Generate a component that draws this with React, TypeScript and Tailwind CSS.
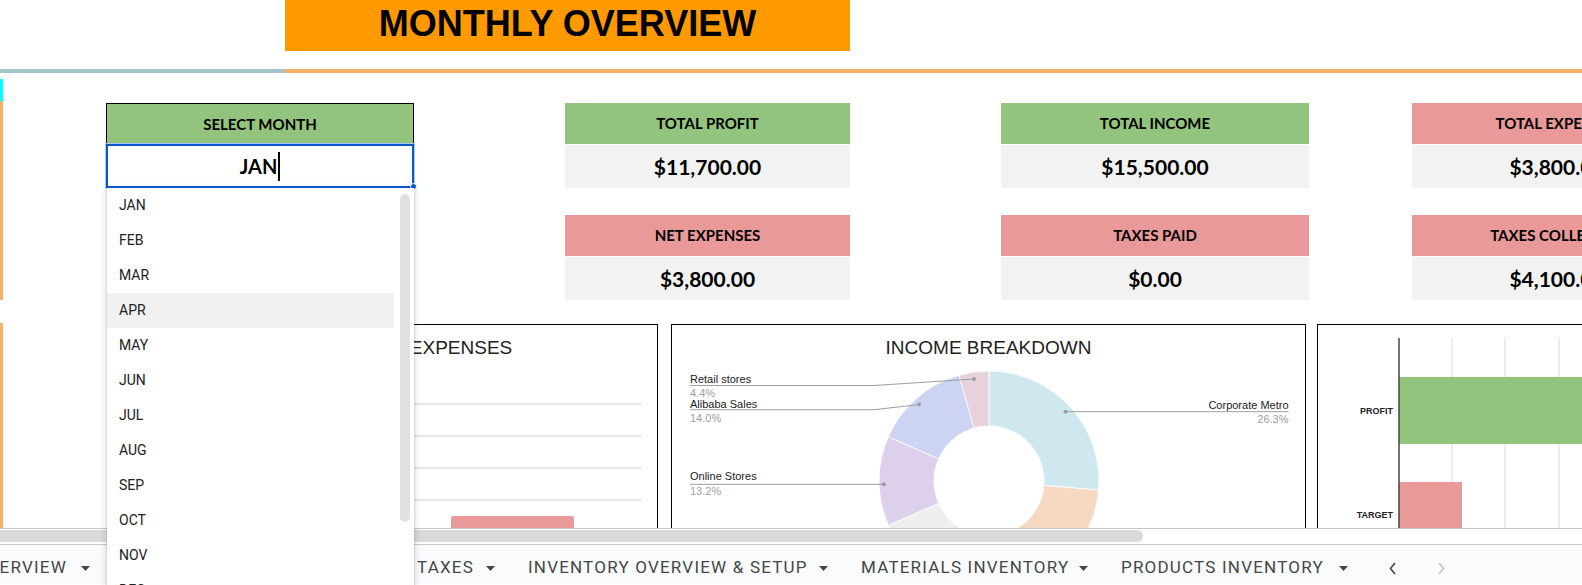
import React from "react"

const months = ["JAN", "FEB", "MAR", "APR", "MAY", "JUN", "JUL", "AUG", "SEP", "OCT", "NOV", "DEC"]

type StatProps = {
  label: string
  value: string
  tone: "green" | "red"
  className: string
}

function Stat({ label, value, tone, className }: StatProps) {
  return (
    <div className={`shrink-0 font-['Lato',sans-serif] text-black ${className}`}>
      <div
        className={`flex h-[41px] items-center justify-center whitespace-nowrap text-[15px] font-bold ${
          tone === "green" ? "bg-[#93c47d]" : "bg-[#ea9999]"
        }`}
      >
        {label}
      </div>
      <div className="mt-[1px] flex h-[43px] items-center justify-center whitespace-nowrap bg-[#f2f2f2] text-[21px] font-bold">
        {value}
      </div>
    </div>
  )
}

function Caret() {
  return (
    <svg width="9" height="5" viewBox="0 0 9 5" className="shrink-0">
      <path d="M0 0h9L4.5 5z" fill="#444746" />
    </svg>
  )
}

function Tab({ name, className }: { name: string; className: string }) {
  return (
    <div className={`flex shrink-0 items-center justify-between pl-[16px] pr-[17px] ${className}`}>
      <span className="whitespace-nowrap">{name}</span>
      <Caret />
    </div>
  )
}

function MonthPicker() {
  return (
    <div className="w-[308px] shrink-0">
      <div className="flex h-[41px] items-center justify-center border border-b-0 border-black bg-[#93c47d] font-['Lato',sans-serif] text-[15px] font-bold text-black">
        SELECT MONTH
      </div>
      <div className="relative flex h-[44px] items-center justify-center border-2 border-[#0b57d0] bg-white font-['Lato',sans-serif] text-[20px] font-bold text-black ring-1 ring-[#a8c7fa]">
        <span>JAN</span>
        <span className="ml-[1px] h-[29px] w-[2px] bg-black" />
        <span className="absolute -bottom-[4px] -right-[5px] h-[7px] w-[7px] rounded-full border border-white bg-[#0b57d0]" />
      </div>
    </div>
  )
}

function MonthMenu() {
  return (
    <div className="absolute left-[107px] top-[188px] z-20 flex h-[420px] w-[307px] bg-white font-['Roboto',sans-serif] text-[14px] text-[#202124] shadow-[0_2px_6px_2px_rgba(60,64,67,0.15),0_1px_2px_rgba(60,64,67,0.3)]">
      <div className="w-[287px]">
        {months.map((m) => (
          <div
            key={m}
            className={`flex h-[35px] items-center pl-[12px] ${m === "APR" ? "bg-[#f1f1f1]" : ""}`}
          >
            {m}
          </div>
        ))}
      </div>
      <div className="ml-[6px] mt-[6px] h-[328px] w-[10px] rounded-full bg-[#e1e1e1]" />
    </div>
  )
}

function ExpensesChart() {
  return (
    <div className="h-[260px] w-[458px] shrink-0 border border-black bg-white">
      <div className="flex h-[46px] items-center justify-center font-['Liberation_Sans',Arial,sans-serif] text-[19px] text-[#222]">
        TOTAL EXPENSES
      </div>
      <svg width="456" height="212" viewBox="0 0 456 212">
        {[33, 65, 97, 129].map((y) => (
          <line key={y} x1="40" x2="440" y1={y} y2={y} stroke="#e0e0e0" strokeWidth="1.5" />
        ))}
        <rect x="250" y="145" width="123" height="80" rx="2" fill="#ea9999" />
      </svg>
    </div>
  )
}

function IncomeChart() {
  const slices = [
    { d: "M317,0 A110,110 0 0 1 426.63,118.97 L371.82,114.49 A55,55 0 0 0 317,55 Z", c: "#cfe7ee" },
    { d: "M426.63,118.97 A110,110 0 0 1 279.38,213.37 L298.19,161.68 A55,55 0 0 0 371.82,114.49 Z", c: "#f7d8c1" },
    { d: "M279.38,213.37 A110,110 0 0 1 216.32,154.31 L266.66,132.16 A55,55 0 0 0 298.19,161.68 Z", c: "#efefef" },
    { d: "M216.32,154.31 A110,110 0 0 1 216.32,65.69 L266.66,87.84 A55,55 0 0 0 266.66,132.16 Z", c: "#dcd0eb" },
    { d: "M216.32,65.69 A110,110 0 0 1 286.98,4.18 L301.99,57.09 A55,55 0 0 0 266.66,87.84 Z", c: "#ccd3f3" },
    { d: "M286.98,4.18 A110,110 0 0 1 317,0 L317,55 A55,55 0 0 0 301.99,57.09 Z", c: "#e7d1dd" },
  ]
  return (
    <div className="h-[260px] w-[635px] shrink-0 border border-black bg-white">
      <div className="flex h-[46px] items-center justify-center font-['Liberation_Sans',Arial,sans-serif] text-[19px] text-[#222]">
        INCOME BREAKDOWN
      </div>
      <svg width="633" height="212" viewBox="0 0 633 212" fontFamily="Liberation Sans, Arial, sans-serif" fontSize="11">
        {slices.map((s, i) => (
          <path key={i} d={s.d} fill={s.c} stroke="#fff" strokeWidth="0.8" />
        ))}
        <g stroke="#9e9e9e" strokeWidth="1" fill="none">
          <polyline points="18,14.5 202,14.5 302,8" />
          <polyline points="18,38.7 202,38.7 247,33.6" />
          <polyline points="18,113.3 212,113.3" />
          <polyline points="393.5,40.7 616.5,40.7" />
        </g>
        <g fill="#9e9e9e">
          <circle cx="302" cy="8" r="2" />
          <circle cx="247" cy="33.6" r="2" />
          <circle cx="212" cy="113.3" r="2" />
          <circle cx="393.5" cy="40.7" r="2" />
        </g>
        <text x="18" y="12" fill="#222">Retail stores</text>
        <text x="18" y="25.5" fill="#9e9e9e">4.4%</text>
        <text x="18" y="36.6" fill="#222">Alibaba Sales</text>
        <text x="18" y="50.7" fill="#9e9e9e">14.0%</text>
        <text x="18" y="109.2" fill="#222">Online Stores</text>
        <text x="18" y="124.4" fill="#9e9e9e">13.2%</text>
        <text x="616.5" y="37.6" fill="#222" textAnchor="end">Corporate Metro</text>
        <text x="616.5" y="51.7" fill="#9e9e9e" textAnchor="end">26.3%</text>
      </svg>
    </div>
  )
}

function TargetChart() {
  return (
    <div className="h-[260px] w-[400px] shrink-0 border border-black bg-white">
      <svg width="398" height="258" viewBox="0 0 398 258" fontFamily="Liberation Sans, Arial, sans-serif">
        {[134, 187, 241, 294, 347].map((x) => (
          <line key={x} x1={x} x2={x} y1="13" y2="258" stroke="#e6e6e6" strokeWidth="1.5" />
        ))}
        <rect x="81" y="52" width="320" height="67" fill="#93c47d" />
        <rect x="81" y="157" width="63" height="67" fill="#ea9999" />
        <line x1="81" x2="81" y1="13" y2="258" stroke="#444" strokeWidth="1.5" />
        <text x="75" y="89" fontSize="9" fontWeight="bold" fill="#222" textAnchor="end">PROFIT</text>
        <text x="75" y="193" fontSize="9" fontWeight="bold" fill="#222" textAnchor="end">TARGET</text>
      </svg>
    </div>
  )
}

export default function App() {
  return (
    <div className="relative h-[585px] w-[1582px] overflow-hidden bg-white font-['Liberation_Sans',Arial,sans-serif]">
      {/* Título */}
      <div className="flex h-[69px]">
        <div className="w-[285px] shrink-0" />
        <div className="flex h-[51px] w-[565px] shrink-0 items-center justify-center bg-[#ff9900] pb-[3px] text-[36px] font-bold leading-none text-black">
          MONTHLY OVERVIEW
        </div>
      </div>
      <div className="flex h-[4px]">
        <div className="w-[285px] shrink-0 bg-[#a2c4c9]" />
        <div className="flex-1 bg-[#f6b26b]" />
      </div>

      {/* Planilha */}
      <div className="flex h-[455px] overflow-hidden">
        <div className="flex w-[3px] shrink-0 flex-col">
          <div className="h-[6px]" />
          <div className="h-[22px] bg-[#00ffff]" />
          <div className="h-[199px] bg-[#f6b26b]" />
          <div className="h-[23px]" />
          <div className="flex-1 bg-[#f6b26b]" />
        </div>

        <div className="flex-1 pt-[30px]">
          <div className="flex">
            <div className="w-[103px] shrink-0" />
            <MonthPicker />
            <div className="w-[151px] shrink-0" />
            <Stat label="TOTAL PROFIT" value="$11,700.00" tone="green" className="w-[285px]" />
            <div className="w-[151px] shrink-0" />
            <Stat label="TOTAL INCOME" value="$15,500.00" tone="green" className="w-[308px]" />
            <div className="w-[103px] shrink-0" />
            <Stat label="TOTAL EXPENSES" value="$3,800.00" tone="red" className="w-[290px]" />
          </div>

          <div className="mt-[27px] flex">
            <div className="w-[562px] shrink-0" />
            <Stat label="NET EXPENSES" value="$3,800.00" tone="red" className="w-[285px]" />
            <div className="w-[151px] shrink-0" />
            <Stat label="TAXES PAID" value="$0.00" tone="red" className="w-[308px]" />
            <div className="w-[103px] shrink-0" />
            <Stat label="TAXES COLLECTED" value="$4,100.00" tone="red" className="w-[290px]" />
          </div>

          <div className="mt-[24px] flex">
            <div className="w-[197px] shrink-0" />
            <ExpensesChart />
            <div className="w-[13px] shrink-0" />
            <IncomeChart />
            <div className="w-[11px] shrink-0" />
            <TargetChart />
          </div>
        </div>
      </div>

      {/* Barra de rolagem */}
      <div className="h-[17px] border-y border-[#c7c7c7] bg-white">
        <div className="mt-[1px] h-[12px] w-[1143px] rounded-r-full bg-[#dadada]" />
      </div>

      {/* Abas */}
      <div className="flex h-[39px] items-center overflow-hidden bg-[#f9fbfd] pt-[7px] font-['Roboto',sans-serif] text-[17px] tracking-[1.2px] text-[#444746]">
        <div className="-ml-[143px] flex w-[250px] shrink-0 items-center justify-end gap-[14px] pr-[17px]">
          <span className="whitespace-nowrap">MONTHLY OVERVIEW</span>
          <Caret />
        </div>
        <Tab name="INCOME & EXPENSES" className="w-[294px]" />
        <Tab name="TAXES" className="w-[111px]" />
        <Tab name="INVENTORY OVERVIEW & SETUP" className="w-[333px]" />
        <Tab name="MATERIALS INVENTORY" className="w-[260px]" />
        <Tab name="PRODUCTS INVENTORY" className="w-[260px]" />
        <div className="ml-[24px] flex items-center gap-[40px]">
          <svg width="8" height="13" viewBox="0 0 8 13">
            <path d="M6 1 1.5 6.5 6 12" stroke="#444746" strokeWidth="1.6" fill="none" />
          </svg>
          <svg width="8" height="13" viewBox="0 0 8 13">
            <path d="M2 1l4.5 5.5L2 12" stroke="#c4c7c5" strokeWidth="1.6" fill="none" />
          </svg>
        </div>
      </div>

      <MonthMenu />
    </div>
  )
}
